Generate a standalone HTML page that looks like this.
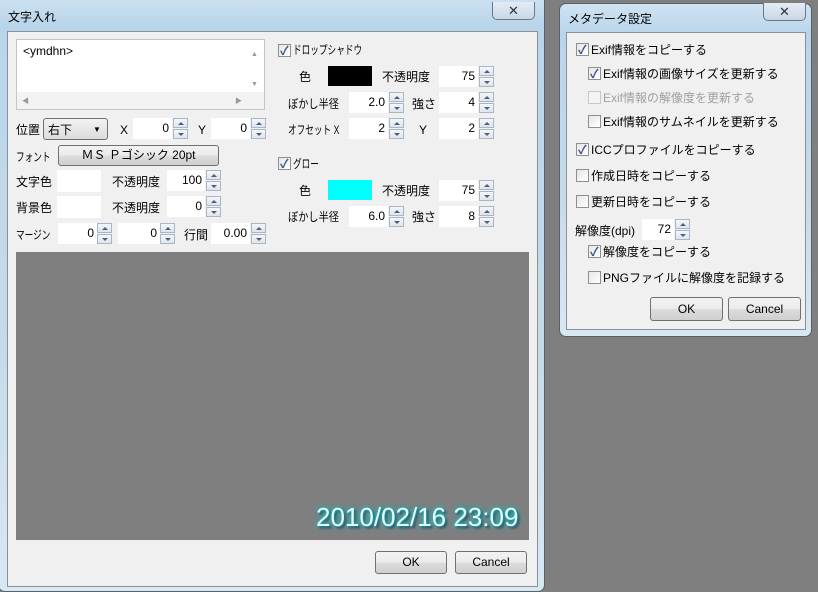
<!DOCTYPE html>
<html><head><meta charset="utf-8"><style>
*{box-sizing:border-box;margin:0;padding:0}
body{width:818px;height:591px;overflow:hidden;background:#7f7f7f;font-family:"Liberation Sans","Noto Sans CJK JP",sans-serif;font-size:12px;color:#000;position:relative}
.a{position:absolute}
.frame{background:linear-gradient(180deg,#cfe3f2 0,#b9d5ea 30px,#c6dbe9 60%,#d8e8f3 100%);border:1px solid #58606a;border-radius:7px}
.client{background:#f0f0f0;border:1px solid #8a9099}
.t{position:absolute;white-space:nowrap;line-height:14px}
.f{position:absolute;background:#fff;height:21px;text-align:right;padding-right:3px;line-height:21px}
.sp{position:absolute;width:15px;height:21px}
.sp i{display:block;width:15px;height:10px;border:1px solid #a9b6c6;background:linear-gradient(#f4f6f9,#dfe5ec);position:relative}
.sp i+i{margin-top:1px}
.sp i:after{content:"";position:absolute;left:4px;top:3px;border-left:3px solid transparent;border-right:3px solid transparent}
.sp i.u:after{border-bottom:3px solid #4d5f7a}
.sp i.d:after{border-top:3px solid #4d5f7a}
.cb{position:absolute;width:13px;height:13px;border:1px solid #8e8f8f;background:linear-gradient(135deg,#e6e6e6,#fff)}
.cb.on:after{content:"✓";position:absolute;left:1px;top:-3px;font-size:12px;color:#3c4f8a;font-weight:bold}
.cb.dis{border-color:#c8c8c8;background:#f4f4f4}
.btn{position:absolute;border:1px solid #707070;border-radius:3px;background:linear-gradient(#f2f2f2 0,#ebebeb 50%,#dddddd 51%,#cfcfcf 100%);text-align:center;font-size:12px}
.xb{position:absolute;width:43px;height:18px;border:1px solid #6d7784;border-top:none;border-radius:0 0 5px 5px;background:linear-gradient(#e3ecf5,#c9d7e6);text-align:center;font-size:13px;line-height:17px;color:#333}
.n{transform:scaleX(.72);transform-origin:0 0}
</style></head><body>

<!-- Dialog 1 -->
<div class="a frame" style="left:-2px;top:-6px;width:547px;height:598px"></div>
<div class="t" style="left:8px;top:10px;font-size:12px">文字入れ</div>
<div class="xb" style="left:492px;top:2px">✕</div>
<div class="a client" style="left:7px;top:31px;width:531px;height:556px"></div>

<div class="a" style="left:16px;top:39px;width:249px;height:71px;background:#fff;border:1px solid #c5c5c5"></div>
<div class="t" style="left:23px;top:44px">&lt;ymdhn&gt;</div>
<div class="t" style="left:251px;top:48px;font-size:7px;color:#999">▲</div>
<div class="t" style="left:251px;top:78px;font-size:7px;color:#999">▼</div>
<div class="a" style="left:17px;top:92px;width:231px;height:17px;background:#f3f3f3"></div>
<div class="a" style="left:248px;top:92px;width:16px;height:17px;background:#f3f3f3"></div>
<div class="t" style="left:22px;top:95px;font-size:7px;color:#999">◀</div>
<div class="t" style="left:235px;top:95px;font-size:7px;color:#999">▶</div>

<div class="t" style="left:16px;top:123px">位置</div>
<div class="a" style="left:43px;top:118px;width:65px;height:22px;border:1px solid #707070;border-radius:3px;background:linear-gradient(#f2f2f2,#dcdcdc)"></div>
<div class="t" style="left:48px;top:123px">右下</div>
<div class="t" style="left:93px;top:123px;font-size:8px">▼</div>
<div class="t" style="left:120px;top:123px">X</div>
<div class="f" style="left:133px;top:118px;width:39px">0</div>
<div class="sp" style="left:173px;top:118px"><i class="u"></i><i class="d"></i></div>
<div class="t" style="left:198px;top:123px">Y</div>
<div class="f" style="left:211px;top:118px;width:39px">0</div>
<div class="sp" style="left:251px;top:118px"><i class="u"></i><i class="d"></i></div>

<div class="t n" style="left:16px;top:150px">フォント</div>
<div class="btn" style="left:58px;top:145px;width:161px;height:21px;line-height:19px">ＭＳ Ｐゴシック 20pt</div>

<div class="t" style="left:16px;top:175px">文字色</div>
<div class="a" style="left:57px;top:170px;width:44px;height:22px;background:#fff"></div>
<div class="t" style="left:112px;top:175px">不透明度</div>
<div class="f" style="left:167px;top:170px;width:38px">100</div>
<div class="sp" style="left:206px;top:170px"><i class="u"></i><i class="d"></i></div>

<div class="t" style="left:16px;top:201px">背景色</div>
<div class="a" style="left:57px;top:196px;width:44px;height:22px;background:#fff"></div>
<div class="t" style="left:112px;top:201px">不透明度</div>
<div class="f" style="left:167px;top:196px;width:38px">0</div>
<div class="sp" style="left:206px;top:196px"><i class="u"></i><i class="d"></i></div>

<div class="t n" style="left:16px;top:228px">マージン</div>
<div class="f" style="left:58px;top:223px;width:39px">0</div>
<div class="sp" style="left:97px;top:223px"><i class="u"></i><i class="d"></i></div>
<div class="f" style="left:118px;top:223px;width:42px">0</div>
<div class="sp" style="left:160px;top:223px"><i class="u"></i><i class="d"></i></div>
<div class="t" style="left:184px;top:228px">行間</div>
<div class="f" style="left:211px;top:223px;width:39px">0.00</div>
<div class="sp" style="left:251px;top:223px"><i class="u"></i><i class="d"></i></div>

<div class="cb on" style="left:278px;top:44px"></div>
<div class="t n" style="left:293px;top:43px">ドロップシャドウ</div>
<div class="t" style="left:299px;top:70px">色</div>
<div class="a" style="left:328px;top:66px;width:44px;height:20px;background:#000"></div>
<div class="t" style="left:382px;top:70px">不透明度</div>
<div class="f" style="left:439px;top:66px;width:39px">75</div>
<div class="sp" style="left:479px;top:66px"><i class="u"></i><i class="d"></i></div>
<div class="t n" style="left:288px;top:97px;transform:scaleX(.85)">ぼかし半径</div>
<div class="f" style="left:349px;top:92px;width:39px">2.0</div>
<div class="sp" style="left:389px;top:92px"><i class="u"></i><i class="d"></i></div>
<div class="t" style="left:412px;top:97px">強さ</div>
<div class="f" style="left:439px;top:92px;width:39px">4</div>
<div class="sp" style="left:479px;top:92px"><i class="u"></i><i class="d"></i></div>
<div class="t n" style="left:288px;top:123px">オフセット X</div>
<div class="f" style="left:349px;top:118px;width:39px">2</div>
<div class="sp" style="left:389px;top:118px"><i class="u"></i><i class="d"></i></div>
<div class="t" style="left:419px;top:123px">Y</div>
<div class="f" style="left:439px;top:118px;width:39px">2</div>
<div class="sp" style="left:479px;top:118px"><i class="u"></i><i class="d"></i></div>

<div class="cb on" style="left:278px;top:157px"></div>
<div class="t n" style="left:293px;top:157px">グロー</div>
<div class="t" style="left:299px;top:184px">色</div>
<div class="a" style="left:328px;top:180px;width:44px;height:20px;background:#00ffff"></div>
<div class="t" style="left:382px;top:184px">不透明度</div>
<div class="f" style="left:439px;top:180px;width:39px">75</div>
<div class="sp" style="left:479px;top:180px"><i class="u"></i><i class="d"></i></div>
<div class="t n" style="left:288px;top:210px;transform:scaleX(.85)">ぼかし半径</div>
<div class="f" style="left:349px;top:206px;width:39px">6.0</div>
<div class="sp" style="left:389px;top:206px"><i class="u"></i><i class="d"></i></div>
<div class="t" style="left:412px;top:210px">強さ</div>
<div class="f" style="left:439px;top:206px;width:39px">8</div>
<div class="sp" style="left:479px;top:206px"><i class="u"></i><i class="d"></i></div>

<div class="a" style="left:16px;top:252px;width:513px;height:288px;background:#7f7f7f"></div>
<div class="t" style="left:316px;top:502px;font-size:26px;line-height:30px;color:#e8fbfb;text-shadow:0 0 4px #18d0d0,0 0 6px #0aa,2px 2px 2px #224">2010/02/16 23:09</div>

<div class="btn" style="left:375px;top:551px;width:72px;height:23px;line-height:21px">OK</div>
<div class="btn" style="left:455px;top:551px;width:72px;height:23px;line-height:21px">Cancel</div>

<!-- Dialog 2 -->
<div class="a frame" style="left:559px;top:3px;width:253px;height:334px"></div>
<div class="t" style="left:568px;top:12px">メタデータ設定</div>
<div class="xb" style="left:763px;top:3px">✕</div>
<div class="a client" style="left:566px;top:32px;width:240px;height:298px"></div>

<div class="cb on" style="left:576px;top:43px"></div>
<div class="t" style="left:591px;top:43px">Exif情報をコピーする</div>
<div class="cb on" style="left:588px;top:67px"></div>
<div class="t" style="left:603px;top:67px">Exif情報の画像サイズを更新する</div>
<div class="cb dis" style="left:588px;top:91px"></div>
<div class="t" style="left:603px;top:91px;color:#a0a0a0">Exif情報の解像度を更新する</div>
<div class="cb" style="left:588px;top:115px"></div>
<div class="t" style="left:603px;top:115px">Exif情報のサムネイルを更新する</div>
<div class="cb on" style="left:576px;top:143px"></div>
<div class="t" style="left:591px;top:143px">ICCプロファイルをコピーする</div>
<div class="cb" style="left:576px;top:169px"></div>
<div class="t" style="left:591px;top:169px">作成日時をコピーする</div>
<div class="cb" style="left:576px;top:195px"></div>
<div class="t" style="left:591px;top:195px">更新日時をコピーする</div>
<div class="t" style="left:575px;top:224px">解像度(dpi)</div>
<div class="f" style="left:642px;top:219px;width:32px">72</div>
<div class="sp" style="left:675px;top:219px"><i class="u"></i><i class="d"></i></div>
<div class="cb on" style="left:588px;top:245px"></div>
<div class="t" style="left:603px;top:245px">解像度をコピーする</div>
<div class="cb" style="left:588px;top:271px"></div>
<div class="t" style="left:603px;top:271px">PNGファイルに解像度を記録する</div>
<div class="btn" style="left:650px;top:297px;width:73px;height:24px;line-height:22px">OK</div>
<div class="btn" style="left:728px;top:297px;width:73px;height:24px;line-height:22px">Cancel</div>

</body></html>
